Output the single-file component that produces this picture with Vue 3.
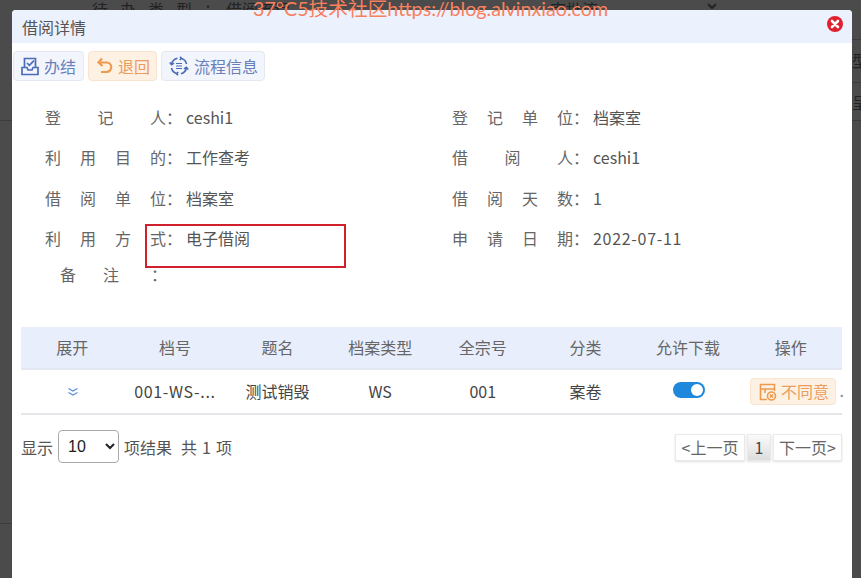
<script setup>
const leftRows = [
  ['登记人', 'ceshi1'],
  ['利用目的', '工作查考'],
  ['借阅单位', '档案室'],
  ['利用方式', '电子借阅'],
]
const rightRows = [
  ['登记单位', '档案室'],
  ['借阅人', 'ceshi1'],
  ['借阅天数', '1'],
  ['申请日期', '2022-07-11'],
]
const heads = ['展开', '档号', '题名', '档案类型', '全宗号', '分类', '允许下载', '操作']
</script>

<template>
  <div class="page">
    <div class="backdrop-top">
      <span class="bg-label">待办类型：</span><span class="bg-value">借阅流程</span><span class="bg-value2">审批流</span>
      <svg class="bg-caret" viewBox="0 0 10 6" width="10" height="6" fill="none" stroke="#222" stroke-width="2"><path d="M1 1l4 4 4-4" /></svg>
    </div>
    <div class="watermark">37°C5技术社区https://blog.alvinxiao.com</div>
    <div class="bg-line l1"></div>
    <div class="bg-line l2"></div>
    <div class="bg-line r0"></div>
    <div class="bg-line r1"></div>
    <div class="bg-line r2"></div>
    <span class="frag f1">型</span>
    <span class="frag f2">呈</span>
    <section class="modal">
      <header class="modal-head">
        <span>借阅详情</span>
        <svg class="close" viewBox="0 0 16 16" width="16" height="16">
          <circle cx="8" cy="8" r="8" fill="#e0202c" />
          <path d="M5 5l6 6M11 5l-6 6" stroke="#fff" stroke-width="2.6" stroke-linecap="round" />
        </svg>
      </header>
      <div class="toolbar">
        <button class="tool blue first">
          <svg viewBox="0 0 18 19" width="18" height="19" fill="none" stroke="#4b6cb7" stroke-width="1.7">
            <path d="M3.5 10V1.5h11V10" />
            <path d="M1 10.5h5l1 2.5h4l1-2.5h5v7H1z" />
            <path d="M6 6l2.4 2.4L13 3.6" />
          </svg>
          办结
        </button>
        <button class="tool orange">
          <svg viewBox="0 0 17 18" width="17" height="18" fill="none" stroke="#ee9a4d" stroke-width="2.2">
            <path d="M6 1.5L2.5 5.5 6.5 9" />
            <path d="M3 5.5H10.5a4.6 4.6 0 0 1 0 9.5H5" />
          </svg>
          退回
        </button>
        <button class="tool blue">
          <svg viewBox="0 0 20 20" width="20" height="20" fill="none" stroke="#4b6cb7" stroke-width="1.6">
            <path d="M2.5 8A7.8 7.8 0 0 1 8.5 2.2M17.5 8A7.8 7.8 0 0 0 12 2.2M2.5 12a7.8 7.8 0 0 0 6 5.8M17.5 12a7.8 7.8 0 0 1-5.5 5.8" />
            <path d="M0.8 6.5l1.8 2.2 2.4-1.6M19.2 13.5l-1.8-2.2-2.4 1.6M11 0.8l1.4 1.4-1.6 1.8M9 19.2l-1.4-1.4 1.6-1.8" />
            <path d="M7 7.5h6M7 10h6M7 12.500h6" stroke-width="1.100" />
          </svg>
          流程信息
        </button>
      </div>
      <div class="info">
        <div class="info-row" v-for="(l, i) in leftRows" :key="i">
          <div class="pair">
            <span class="label">
              <i v-for="c in l[0]" :key="c">{{ c }}</i>
            </span><span class="colon">：</span><span class="val">{{ l[1] }}</span>
          </div>
          <div class="pair">
            <span class="label">
              <i v-for="c in rightRows[i][0]" :key="c">{{ c }}</i>
            </span><span class="colon">：</span><span class="val" :class="{ date: i === 3 }">{{ rightRows[i][1] }}</span>
          </div>
        </div>
        <div class="note-row">
          <span class="note-label"><i>备</i><i>注</i></span><span class="note-colon">：</span>
        </div>
        <div class="redbox"></div>
      </div>
      <div class="table">
        <div class="tr th">
          <div v-for="h in heads" :key="h" class="cell">{{ h }}</div>
        </div>
        <div class="tr td">
          <div class="cell">
            <svg class="expand" viewBox="0 0 12 10" width="12" height="10" fill="none" stroke="#5b8fd9" stroke-width="1.3">
              <path d="M1.500 1.500L6 4l4.500-2.500M1.500 5.500L6 8l4.500-2.500" />
            </svg>
          </div>
          <div class="cell code">001-WS-...</div>
          <div class="cell">测试销毁</div>
          <div class="cell">WS</div>
          <div class="cell">001</div>
          <div class="cell">案卷</div>
          <div class="cell"><span class="switch"><span class="knob"></span></span></div>
          <div class="cell op">
            <button class="reject">
              <svg viewBox="0 0 18 18" width="18" height="18" fill="none" stroke="#ee9a4d" stroke-width="1.600">
                <path d="M8 16.500H1.500V1.500h14V8" />
                <path d="M1.500 6h14M6 6v4" />
                <circle cx="12.500" cy="13" r="4" />
                <path d="M11 11.500l3 3M14 11.500l-3 3" />
              </svg>
              不同意
            </button>
            <span class="dot">.</span>
          </div>
        </div>
      </div>
      <div class="foot">
        <div class="foot-left">
          <span>显示</span>
          <select class="size">
            <option>10</option>
          </select>
          <span>项结果</span>
          <span class="total">共 1 项</span>
        </div>
        <div class="pager">
          <span class="pg">&lt;上一页</span>
          <span class="pg current">1</span>
          <span class="pg last">下一页&gt;</span>
        </div>
      </div>
    </section>
  </div>
</template>

<style>
html, body { margin: 0; height: 100%; overflow: hidden; }
</style>

<style scoped>
.page {
  position: relative;
  width: 861px;
  height: 578px;
  overflow: hidden;
  background: #4b4b4b;
  font-family: "Noto Sans CJK SC", "Liberation Sans", sans-serif;
  color: #555;
  font-size: 16px;
}
.backdrop-top {
  position: absolute;
  top: -3px;
  left: 92px;
  color: #222;
  line-height: 24px;
  white-space: nowrap;
}
.bg-label { letter-spacing: 12px; }
.bg-value { margin-left: -6px; }
.bg-value2 { position: absolute; left: 458px; }
.bg-caret { position: absolute; left: 615px; top: 6px; }
.watermark {
  position: absolute;
  z-index: 3;
  top: -4px;
  left: 253px;
  font-family: Lato, "Noto Sans CJK SC", sans-serif;
  font-size: 19.7px;
  line-height: 26px;
  color: #f9805c;
  white-space: nowrap;
}
.bg-line { position: absolute; height: 1px; background: #3c3c3c; }
.l1 { left: 0; width: 12px; top: 120px; }
.l2 { left: 0; width: 12px; top: 523px; }
.r0 { left: 852px; width: 9px; top: 39px; }
.r1 { left: 852px; width: 9px; top: 82px; }
.r2 { left: 852px; width: 9px; top: 120px; }
.frag { position: absolute; left: 852px; color: #222; line-height: 22px; }
.f1 { top: 49px; }
.f2 { top: 91px; }
.modal {
  position: absolute;
  left: 12px;
  top: 10px;
  width: 840px;
  height: 580px;
  background: #fff;
  border-radius: 4px 4px 0 0;
}
.modal-head {
  height: 33px;
  background: #ecf1fe;
  border-radius: 4px 4px 0 0;
  display: flex;
  align-items: center;
  justify-content: space-between;
  padding: 0 9px 0 10px;
  font-size: 16px;
  color: #555;
}
.close { margin-top: -5px; }
.toolbar {
  display: flex;
  gap: 4px;
  padding: 8px 0 0 1px;
}
.tool {
  height: 30px;
  border: 1px solid #e4e8f0;
  border-radius: 4px;
  background: #f2f5fb;
  display: flex;
  align-items: center;
  gap: 5px;
  padding: 0 6px 0 7px;
  font: inherit;
  font-size: 16px;
  color: #6a80bc;
}
.tool.first { padding-right: 7px; }
.tool.orange {
  background: #fdf1e4;
  border-color: #f8e4cf;
  color: #ea9d5c;
}
.info {
  position: relative;
  box-sizing: border-box;
  height: 246px;
  padding: 25px 0 0 33px;
}
.info-row { display: flex; height: 40.4px; align-items: flex-start; }
.pair { flex: none; width: 407px; display: flex; align-items: center; height: 22px; }
.label { width: 121px; display: flex; justify-content: space-between; color: #666; }
.label i { font-style: normal; }
.colon { width: 20px; color: #666; }
.val.date { letter-spacing: .7px; }
.note-row { display: flex; margin: -4.500px 0 0 15px; height: 22px; align-items: center; color: #666; }
.note-label { width: 59px; display: flex; justify-content: space-between; }
.note-label i { font-style: normal; }
.note-colon { margin-left: 32px; }
.redbox {
  position: absolute;
  left: 133px;
  top: 143px;
  width: 201px;
  height: 44px;
  border: 2px solid #d0202c;
  box-sizing: border-box;
}
.table { margin: 0 10px 0 9px; }
.tr { display: grid; grid-template-columns: repeat(8, 102.625px); text-align: center; box-sizing: border-box; }
.th {
  height: 43px;
  background: #e8eefc;
  border-bottom: 2px solid #e3e7f0;
  line-height: 41px;
  color: #666;
}
.td {
  height: 45px;
  border-bottom: 2px solid #e4e6ea;
  line-height: 43px;
  color: #444;
}
.cell { white-space: nowrap; }
.code { letter-spacing: .7px; }
.expand { vertical-align: 1px; margin-left: 2px; }
.switch {
  display: inline-block;
  width: 32px;
  height: 16px;
  border-radius: 8px;
  background: #1e88dc;
  position: relative;
  vertical-align: 0;
  margin-left: 2px;
}
.knob {
  position: absolute;
  right: 2px;
  top: 2px;
  width: 12px;
  height: 12px;
  border-radius: 50%;
  background: #fff;
}
.op { position: relative; text-align: left; }
.reject {
  position: absolute;
  left: 10.500px;
  top: 8px;
  box-sizing: border-box;
  width: 86px;
  height: 27px;
  padding: 0 0 0 8px;
  display: flex;
  align-items: center;
  gap: 4px;
  border: 1px solid #f8e4cf;
  border-radius: 4px;
  background: #fdf1e4;
  color: #ea9d5c;
  font: inherit;
  font-size: 16px;
}
.dot { position: absolute; left: 100px; top: -1px; color: #888; }
.foot {
  display: flex;
  justify-content: space-between;
  align-items: center;
  padding: 15px 10px 0 9px;
}
.foot-left { display: flex; align-items: center; gap: 5px; }
.size {
  width: 61px;
  height: 33px;
  font-size: 16px;
  font-family: "Liberation Sans", sans-serif;
  color: #222;
  background: #fff;
  border: 1px solid #aaa;
  border-radius: 4px;
  padding-left: 5px;
}
.total { margin-left: 4px; word-spacing: 1.500px; }
.pager { display: flex; gap: 2px; margin-top: 2px; }
.pg {
  box-sizing: border-box;
  width: 70px;
  height: 27px;
  line-height: 25px;
  text-align: center;
  background: #fff;
  border: 1px solid #eaeaea;
  box-shadow: 0 1px 2px rgba(0,0,0,.12);
  color: #666;
  white-space: nowrap;
}
.pg.last { width: 69px; }
.pg.current { width: 24px; background: linear-gradient(#fafafa, #ddd); color: #444; }
</style>
